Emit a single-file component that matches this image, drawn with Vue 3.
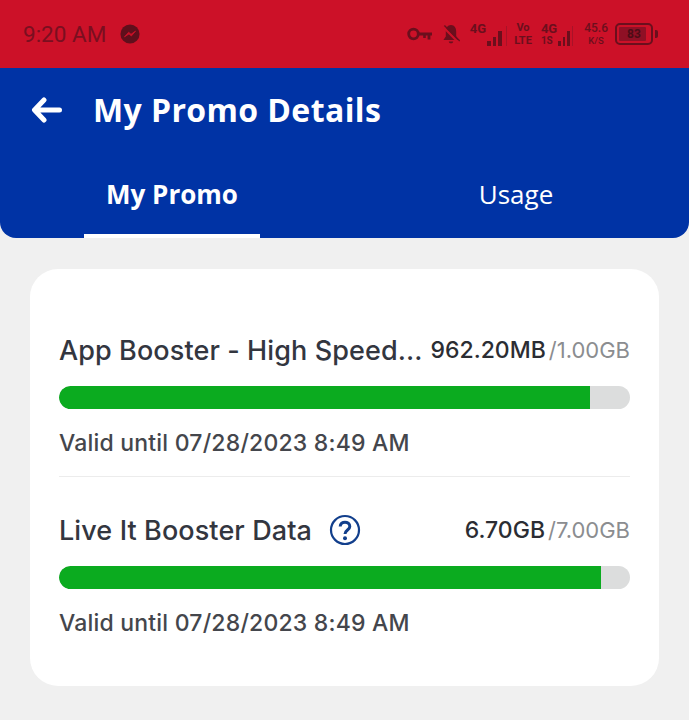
<template>
  <div class="screen">
    <div class="status-bar">
      <div class="status-left">
        <span class="clock">9:20 AM</span>
        <svg class="messenger" width="20" height="20" viewBox="0 0 18 18">
          <circle cx="9" cy="9" r="8.6" fill="#5f0f1c" />
          <path d="M4 11.6 L7.8 7.4 L9.9 9.3 L14 6.4 L10.2 10.8 L8.1 8.9 Z" fill="#cc1128" stroke="#cc1128" stroke-width="0.7" />
        </svg>
      </div>
      <div class="status-right">
        <svg class="key" width="25" height="15" viewBox="0 0 25 15">
          <circle cx="6.5" cy="7" r="4.8" fill="none" stroke="#6b0f1d" stroke-width="2.8" />
          <path d="M11 5.6 H25 V8.4 H23.4 V12.5 H20.6 V8.4 H18.8 V11 H16.2 V8.4 H11 Z" fill="#6b0f1d" />
        </svg>
        <svg class="bell" width="18" height="21" viewBox="0 0 18 21">
          <path d="M9 1 C5.4 1 3.8 4 3.8 7.4 V12.6 L1.4 16 H16.6 L14.2 12.6 V7.4 C14.2 4 12.6 1 9 1 Z" fill="#6b0f1d" />
          <path d="M6.8 17.4 H11.2 C11.2 20 6.8 20 6.8 17.4 Z" fill="#6b0f1d" />
          <path d="M1 2.8 L16.4 18.4" stroke="#cc1128" stroke-width="2.2" />
          <path d="M2.4 1.4 L17.8 17" stroke="#6b0f1d" stroke-width="1.4" />
        </svg>
        <div class="net net1">
          <span class="net-label">4G</span>
          <div class="bars">
            <i class="b1"></i><i class="b2"></i><i class="b3"></i><i class="b4"></i>
          </div>
        </div>
        <div class="stack volte">
          <span>Vo</span>
          <span>LTE</span>
        </div>
        <div class="net net2">
          <div class="net-col">
            <span class="net-label">4G</span>
            <span class="net-sub">1S</span>
          </div>
          <div class="bars">
            <i class="b1"></i><i class="b2"></i><i class="b3"></i><i class="b4"></i>
          </div>
        </div>
        <div class="stack speed">
          <span>45.6</span>
          <span class="unit">K/S</span>
        </div>
        <div class="battery">
          <div class="battery-body"><span class="battery-level">83</span></div>
          <div class="battery-tip"></div>
        </div>
      </div>
    </div>

    <header class="app-header">
      <div class="title-row">
        <svg class="back" width="32" height="26" viewBox="0 0 32 26">
          <path d="M13 3 L3.5 13 L13 23 M4.5 13 H28.5" fill="none" stroke="#fff" stroke-width="5" stroke-linecap="round" stroke-linejoin="round" />
        </svg>
        <h1>My Promo Details</h1>
      </div>
      <div class="tabs">
        <div class="tab active">My Promo</div>
        <div class="tab">Usage</div>
      </div>
    </header>

    <main class="content">
      <section class="card">
        <div v-for="(promo, i) in promos" :key="promo.name" class="promo" :class="{ first: i === 0 }">
          <div class="promo-head">
            <div class="promo-name">
              <span>{{ promo.name }}</span>
              <svg v-if="promo.help" class="help" width="32" height="32" viewBox="0 0 32 32">
                <circle cx="16" cy="16" r="14" fill="none" stroke="#123f8c" stroke-width="2.2" />
                <path d="M11.2 12.6 C11.2 6.6 20.8 6.8 20.8 12.4 C20.8 16 16 16 16 20" fill="none" stroke="#123f8c" stroke-width="3" />
                <circle cx="16" cy="24.2" r="2" fill="#123f8c" />
              </svg>
            </div>
            <div class="promo-amount">
              <span class="used">{{ promo.used }}</span>
              <span class="total">/{{ promo.total }}</span>
            </div>
          </div>
          <div class="track">
            <div class="fill" :style="{ width: promo.percent + '%' }"></div>
          </div>
          <p class="valid">Valid until 07/28/2023 8:49 AM</p>
        </div>
      </section>
    </main>
  </div>
</template>

<script setup>
const promos = [
  { name: 'App Booster - High Speed...', used: '962.20MB', total: '1.00GB', percent: 93, help: false },
  { name: 'Live It Booster Data', used: '6.70GB', total: '7.00GB', percent: 95, help: true },
]
</script>

<style>
html,
body {
  margin: 0;
  background: #f0f0f0;
}
</style>

<style scoped>
.screen {
  width: 689px;
  height: 720px;
  overflow: hidden;
  background: #f0f0f0;
  font-family: 'Open Sans', sans-serif;
}

/* barra de status */
.status-bar {
  height: 68px;
  background: #cc1128;
  display: flex;
  justify-content: space-between;
  align-items: center;
  padding: 0 31px 0 23px;
  box-sizing: border-box;
  color: #6b0f1d;
}

.status-left {
  display: flex;
  align-items: center;
  gap: 14px;
}

.clock {
  font-family: Roboto, sans-serif;
  font-size: 22.5px;
  color: #7a0f20;
}

.status-right {
  display: flex;
  align-items: center;
  font-family: Roboto, sans-serif;
  font-weight: 700;
}

.bell {
  margin-left: 10px;
}

.net {
  display: flex;
  align-items: flex-end;
  gap: 1px;
  height: 23px;
  margin-left: 10px;
}

.net-label {
  font-size: 13px;
  line-height: 12px;
  align-self: flex-start;
}

.net-col {
  display: flex;
  flex-direction: column;
  align-self: stretch;
  justify-content: space-between;
}

.net-sub {
  font-size: 10px;
  line-height: 10px;
}

.bars {
  display: flex;
  align-items: flex-end;
  gap: 2px;
}

.bars i {
  display: block;
  width: 2.5px;
  background: #6b0f1d;
}

.net1 .bars i {
  width: 3.5px;
}

.bars .b1 {
  height: 5px;
}

.bars .b2 {
  height: 9px;
}

.bars .b3 {
  height: 15px;
}

.bars .b4,
.net1 .bars .b4 {
  height: 20px;
  background: #a91228;
  width: 1.5px;
}

.net1 .bars .b4 {
  margin-left: 2px;
}

.stack {
  display: flex;
  flex-direction: column;
  align-items: center;
}

.volte {
  font-size: 11px;
  line-height: 13px;
  margin-left: 7px;
}

.net2 {
  margin-left: 9px;
}

.speed {
  font-size: 12px;
  line-height: 13px;
  font-weight: 500;
  margin-left: 11px;
}

.speed .unit {
  font-size: 9.5px;
  line-height: 11px;
}

.battery {
  display: flex;
  align-items: center;
  gap: 2px;
  margin-left: 7px;
}

.battery-body {
  width: 38px;
  height: 22px;
  box-sizing: border-box;
  border: 2px solid #6b0f1d;
  border-radius: 5px;
  padding: 2px;
  display: flex;
}

.battery-level {
  width: 24px;
  background: #8f1025;
  border-radius: 1px;
  font-size: 12px;
  line-height: 14px;
  text-align: center;
  color: #4c0c16;
  padding-left: 3px;
}

.battery-tip {
  width: 3px;
  height: 8px;
  background: #6b0f1d;
  border-radius: 0 2px 2px 0;
}

/* cabeçalho */
.app-header {
  height: 170px;
  background: #0033a5;
  border-radius: 0 0 16px 16px;
  color: #fff;
  display: flex;
  flex-direction: column;
  box-sizing: border-box;
}

.title-row {
  display: flex;
  align-items: center;
  gap: 30px;
  padding: 28px 0 0 31px;
}

h1 {
  margin: 0;
  font-size: 32px;
  line-height: 28px;
  font-weight: 700;
  letter-spacing: 0.4px;
}

.tabs {
  margin-top: auto;
  display: flex;
  padding-left: 84px;
}

.tab {
  height: 60px;
  font-size: 26px;
  line-height: 32px;
  text-align: center;
  box-sizing: border-box;
  width: 176px;
}

.tab:not(.active) {
  margin-left: 168px;
}

.tab.active {
  font-weight: 700;
  border-bottom: 4px solid #fff;
}

/* conteúdo */
.content {
  padding: 31px 30px 0;
}

.card {
  background: #fff;
  border-radius: 28px;
  height: 417px;
  box-sizing: border-box;
  padding: 0 29px;
}

.promo {
  height: 180px;
  padding-top: 36px;
  box-sizing: border-box;
}

.promo.first {
  height: 208px;
  padding-top: 64px;
  border-bottom: 1px solid #ececec;
}

.promo-head {
  display: flex;
  justify-content: space-between;
  align-items: center;
  height: 34px;
  font-family: Inter, sans-serif;
}

.promo-name {
  display: flex;
  align-items: center;
  gap: 17px;
  font-size: 27px;
  font-weight: 500;
  letter-spacing: 0.1px;
  color: #33363f;
}

.promo-amount {
  display: flex;
  align-items: baseline;
  gap: 3px;
}

.used {
  font-size: 23px;
  font-weight: 500;
  color: #2b2d33;
}

.total {
  font-size: 22px;
  color: #8b8d90;
}

.track {
  margin-top: 19px;
  height: 23px;
  background: #dcdddd;
  border-radius: 12px;
  overflow: hidden;
}

.fill {
  height: 100%;
  background: #0bab1f;
  border-radius: 12px 0 0 12px;
}

.valid {
  margin: 20px 0 0;
  font-family: Inter, sans-serif;
  font-size: 23px;
  font-weight: 500;
  line-height: 28px;
  letter-spacing: 0.2px;
  color: #44464c;
}
</style>
